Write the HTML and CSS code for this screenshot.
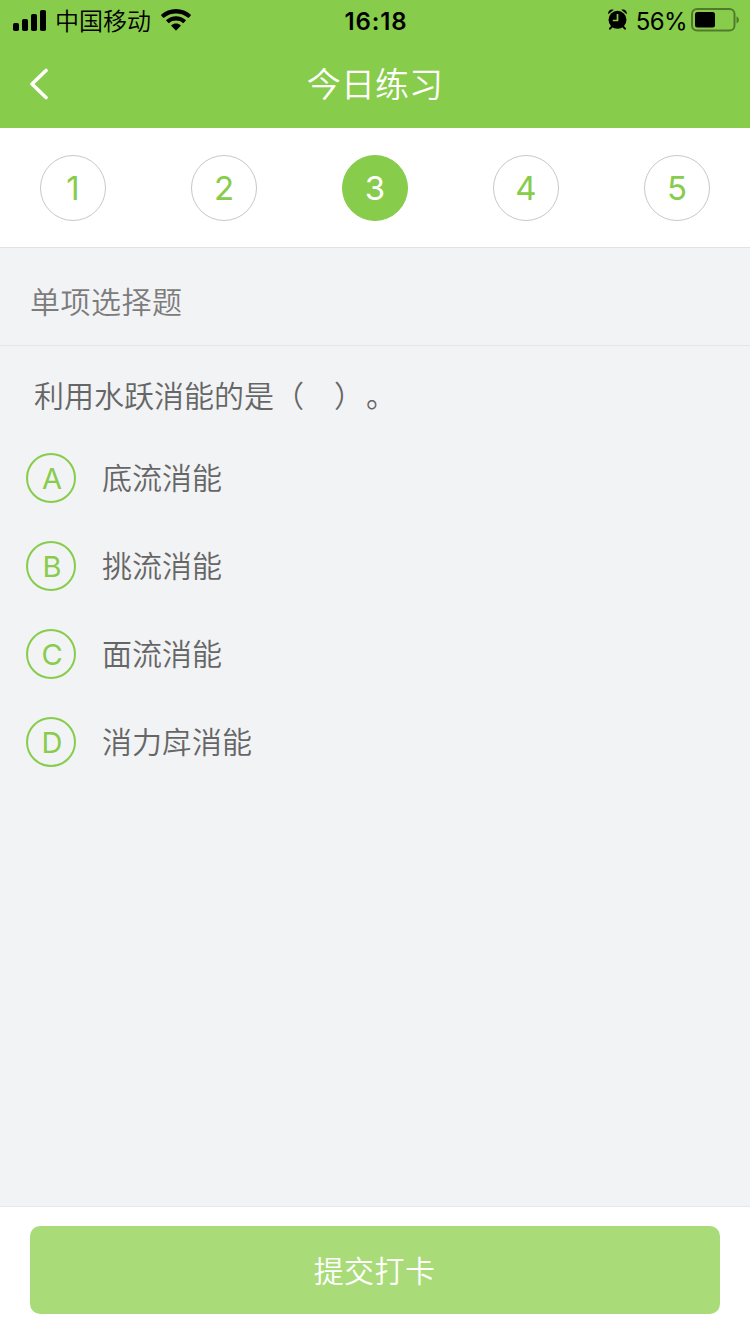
FILE: index.html
```html
<!DOCTYPE html>
<html lang="zh-CN">
<head>
<meta charset="utf-8">
<title>今日练习</title>
<link rel="stylesheet" href="styles.css">
</head>
<body>
<div class="app">
  <header class="header">
    <div class="status">
      <div class="status-left">
        <svg class="signal" width="33" height="21" viewBox="0 0 33 21">
          <rect x="0" y="13" width="6" height="8" rx="1.8"/>
          <rect x="9" y="9" width="6" height="12" rx="1.8"/>
          <rect x="18" y="4" width="6" height="17" rx="1.8"/>
          <rect x="27" y="0" width="6" height="21" rx="1.8"/>
        </svg>
        <span class="carrier">中国移动</span>
        <svg class="wifi" width="30" height="22" viewBox="0 0 30 22">
          <path d="M15 0C9.300 0 4 2.200 0.200 5.800Q-.1 6.200.2 6.600L2.200 8.700Q2.600 9 3 8.700C6.300 5.800 10.500 4.400 15 4.400S23.700 5.800 27 8.700Q27.400 9 27.800 8.700L29.800 6.600Q30.100 6.200 29.800 5.800C26 2.200 20.700 0 15 0Z"/>
          <path d="M15 7.300C11.300 7.300 7.900 8.700 5.300 11Q5 11.400 5.300 11.800L7.500 14Q7.800 14.300 8.200 14C10.100 12.400 12.400 11.600 15 11.600S19.900 12.400 21.800 14Q22.200 14.300 22.500 14L24.700 11.800Q25 11.400 24.700 11C22.100 8.700 18.700 7.300 15 7.300Z"/>
          <path d="M15 14.600C13.200 14.600 11.600 15.200 10.400 16.200Q10 16.600 10.400 17L14.600 21.300Q15 21.700 15.400 21.300L19.600 17Q20 16.600 19.600 16.200C18.400 15.200 16.800 14.600 15 14.600Z"/>
        </svg>
      </div>
      <span class="clock">16:18</span>
      <div class="status-right">
        <svg class="alarm" width="19" height="21" viewBox="0 0 19 21">
          <circle cx="9.500" cy="10.800" r="9"/>
          <path class="alarm-legs" d="M4 17.500L2 19.700M15 17.500L17 19.700"/>
          <path d="M0.400 5.300C-.6 2.100 2.600-.7 5.700.8ZM18.600 5.300C19.600 2.100 16.400-.7 13.300.8Z"/>
          <path class="alarm-hands" d="M9.500 5V11.500H4.800"/>
        </svg>
        <span class="percent">56%</span>
        <svg class="battery" width="48" height="24" viewBox="0 0 48 24">
          <rect class="battery-case" x="1" y="1" width="42.500" height="21.500" rx="5"/>
          <rect x="4" y="4" width="20" height="15.500" rx="2.500"/>
          <path class="battery-tip" d="M45.500 8.200Q48 9.200 48 11.800T45.500 15.400Z"/>
        </svg>
      </div>
    </div>
    <div class="titlebar">
      <svg class="back" width="18" height="32" viewBox="0 0 18 32"><path d="M16 2.500L2 16L16 29.500"/></svg>
      <h1 class="title">今日练习</h1>
    </div>
  </header>
  <nav class="steps">
    <span class="step">1</span>
    <span class="step">2</span>
    <span class="step step-active">3</span>
    <span class="step">4</span>
    <span class="step">5</span>
  </nav>
  <h2 class="section">单项选择题</h2>
  <main class="question">
    <p class="stem">利用水跃消能的是<span class="paren-open">（</span><span class="paren-close">）</span><span class="stop">。</span></p>
    <ul class="options">
      <li class="option"><span class="key">A</span><span class="answer">底流消能</span></li>
      <li class="option"><span class="key">B</span><span class="answer">挑流消能</span></li>
      <li class="option"><span class="key">C</span><span class="answer">面流消能</span></li>
      <li class="option"><span class="key">D</span><span class="answer">消力戽消能</span></li>
    </ul>
  </main>
  <footer class="footer"><button class="submit">提交打卡</button></footer>
</div>
</body>
</html>
```
FILE: styles.css
```css
* { box-sizing: border-box; }
body { margin: 0; font-family: "Noto Sans CJK SC", sans-serif; font-weight: 350; text-spacing-trim: space-all; }
h1, h2, p, ul { margin: 0; padding: 0; font-weight: 350; }
.app { display: flex; flex-direction: column; width: 750px; height: 1334px; background: #f2f3f5; }

.header { height: 128px; background: #87cc4b; }
.status { display: grid; grid-template-columns: 1fr auto 1fr; align-items: center; height: 40px; padding: 0 11px 0 13px; }
.status-left, .status-right { display: flex; align-items: center; }
.status-right { justify-content: flex-end; }
.carrier { margin: 0 10px 0 9px; font-size: 24px; line-height: 40px; }
.clock { margin-top: 2px; font-family: Inter, sans-serif; font-size: 24px; font-weight: 600; letter-spacing: 0.9px; }
.percent { margin: 2px 4px 0 9px; font-family: Inter, sans-serif; font-size: 24px; font-weight: 400; letter-spacing: -0.6px; }
.battery { flex: none; }
.alarm { margin-top: -2px; }
.battery-case { fill: none; stroke: #000; stroke-opacity: 0.4; stroke-width: 2; }
.battery-tip { fill-opacity: 0.4; }
.alarm-legs { fill: none; stroke: #000; stroke-width: 2; stroke-linecap: round; }
.alarm-hands { fill: none; stroke: #87cc4b; stroke-width: 1.7; }

.titlebar { display: grid; grid-template-columns: 1fr auto 1fr; align-items: center; height: 88px; padding: 0 30px; }
.back { fill: none; stroke: #fff; stroke-width: 3.6; stroke-linecap: round; stroke-linejoin: round; }
.title { padding-bottom: 2px; color: #fff; font-size: 34px; line-height: 50px; letter-spacing: 0.1px; }

.steps { display: flex; justify-content: space-between; align-items: center; height: 120px; padding: 0 40px; background: #fff; border-bottom: 1px solid #e2e2e4; }
.step { display: grid; place-items: center; width: 66px; height: 66px; padding-top: 1px; border: 1px solid #c8c8c8; border-radius: 50%; color: #87cc4b; font-family: Inter, sans-serif; font-size: 33px; font-weight: 400; }
.step-active { border-color: #87cc4b; background: #87cc4b; color: #fff; }

.section { height: 98px; padding: 0 30px; border-bottom: 1px solid #e4e5e8; color: #7c7c7c; font-size: 30px; line-height: 105px; letter-spacing: 0.5px; }
.question { flex: 1; padding: 24px 26px 0; color: #666; font-size: 30px; line-height: 48px; }
.stem { padding-left: 8px; }
.paren-close { margin-left: 30px; }
.stop { margin-left: 2px; }
.options { display: grid; gap: 38px; margin-top: 35px; list-style: none; }
.option { display: flex; align-items: center; gap: 26px; height: 50px; }
.answer { padding-bottom: 4px; }
.key { display: grid; place-items: center; width: 50px; height: 50px; padding: 2px 0 0 2px; border: 2px solid #87cc4b; border-radius: 50%; color: #87cc4b; font-family: Inter, sans-serif; font-size: 29px; font-weight: 400; line-height: 36px; }

.footer { height: 128px; padding: 19px 30px; border-top: 1px solid #e6e7ea; background: #fff; }
.submit { display: block; width: 100%; height: 88px; padding: 0 1px 2px 0; border: 0; border-radius: 10px; background: #a9dc79; color: #fff; font-family: "Noto Sans CJK SC", sans-serif; font-size: 30px; font-weight: 350; letter-spacing: 0.4px; }
```
